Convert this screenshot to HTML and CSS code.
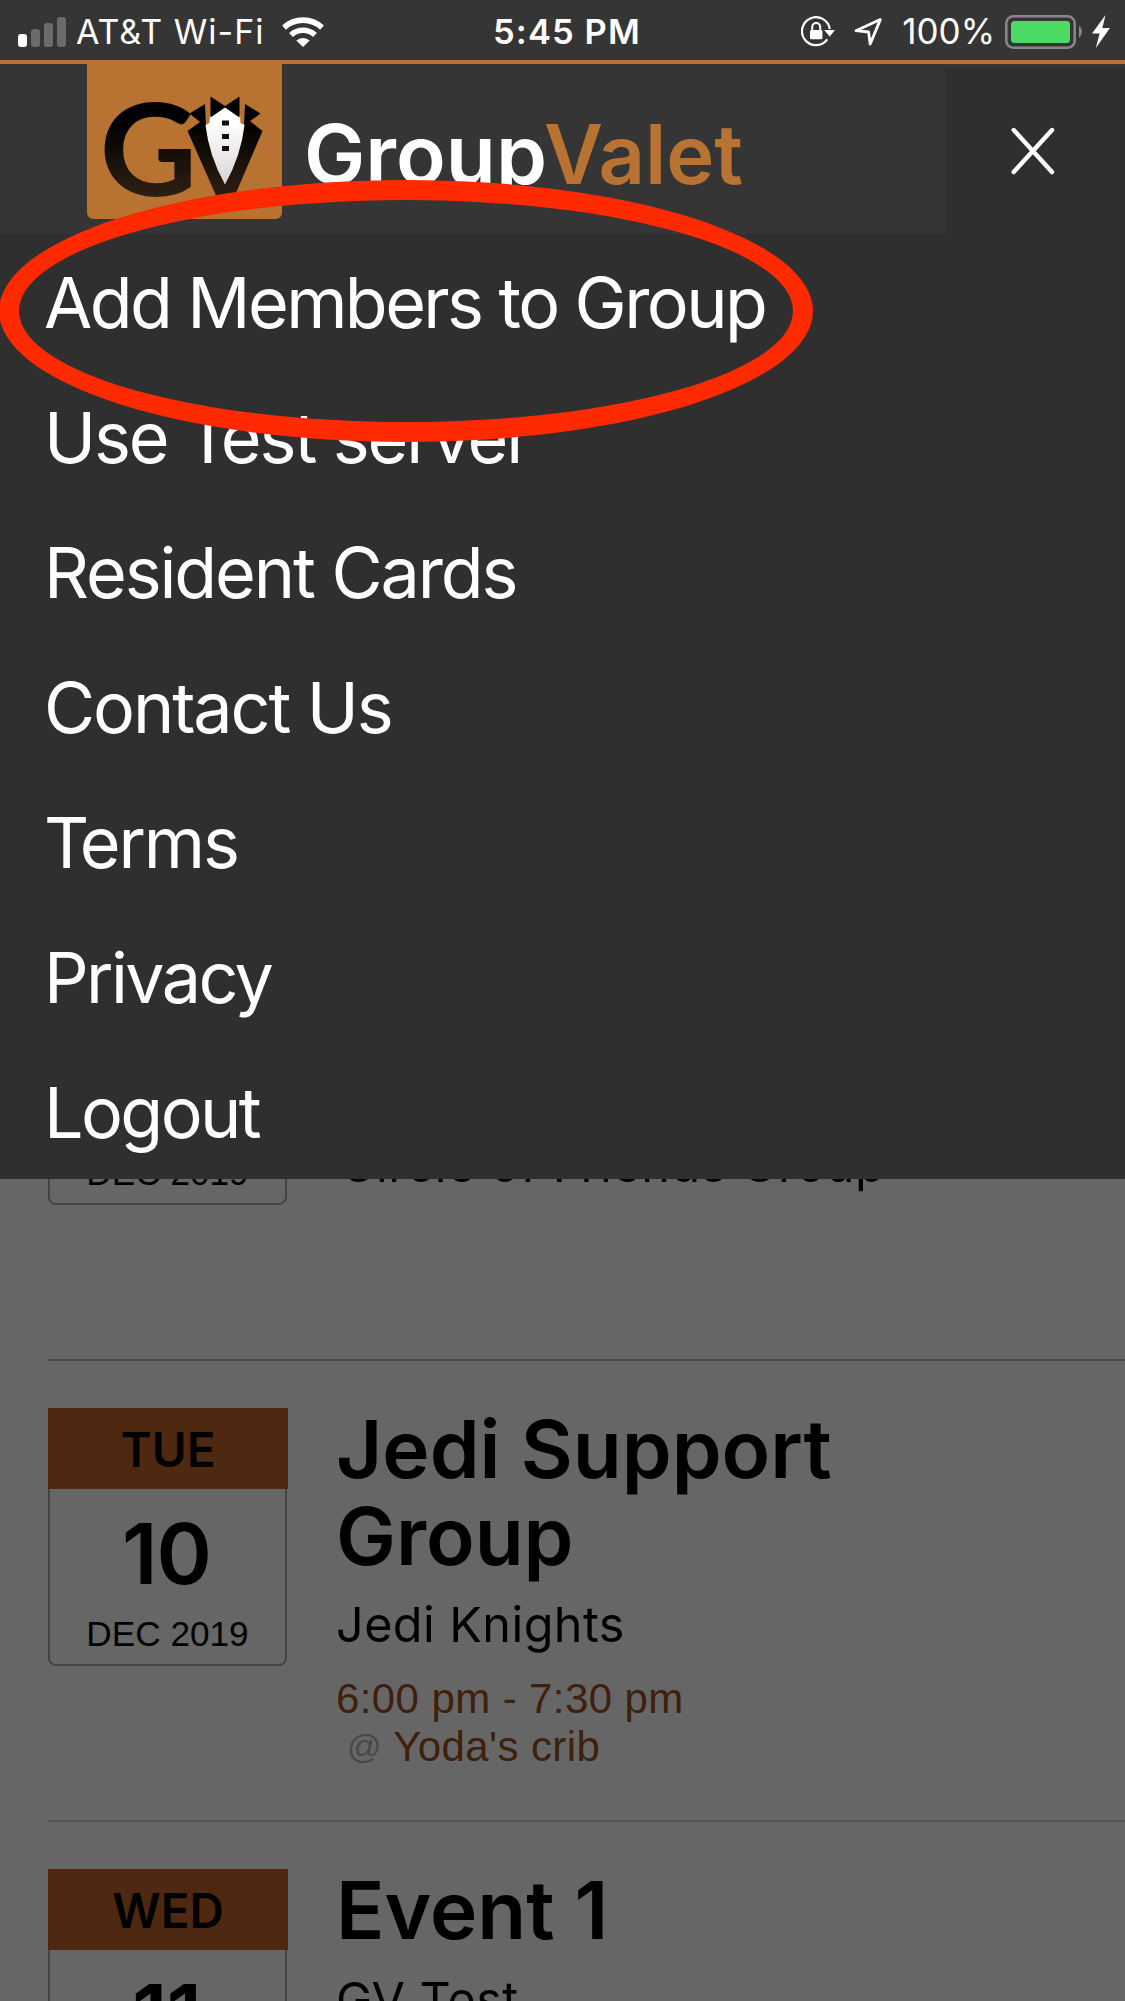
FILE: index.html
```html
<!DOCTYPE html>
<html lang="en">
  <head>
    <meta charset="UTF-8" />
    <meta name="viewport" content="width=device-width, initial-scale=1.0" />
    <title>GroupValet</title>
    <link rel="stylesheet" href="styles.css">
  </head>
  <body>
    <!-- Event list, dimmed behind the menu -->
    <main class="events">
      <section class="event">
        <div class="date-card">
          <div class="weekday"></div>
          <div class="day"></div>
          <div class="month">DEC 2019</div>
        </div>
        <div class="info">
          <h2 class="two-line"></h2>
          <p class="group wide">Circle of Friends Group</p>
        </div>
      </section>

      <section class="event">
        <div class="date-card">
          <div class="weekday">TUE</div>
          <div class="day">10</div>
          <div class="month">DEC 2019</div>
        </div>
        <div class="info">
          <h2>Jedi Support<br>Group</h2>
          <p class="group">Jedi Knights</p>
          <p class="time">6:00 pm - 7:30 pm</p>
          <p class="place"><span class="at">@</span> Yoda's crib</p>
        </div>
      </section>

      <section class="event last">
        <div class="date-card">
          <div class="weekday">WED</div>
          <div class="day">11</div>
        </div>
        <div class="info">
          <h2>Event 1</h2>
          <p class="group">GV Test</p>
        </div>
      </section>
    </main>

    <!-- Menu overlay -->
    <div class="overlay">
      <div class="status-bar">
        <div class="status-left">
          <svg class="signal" width="48" height="30" viewBox="0 0 48 30">
            <rect x="0" y="17" width="9" height="13" rx="3" fill="#fff" />
            <rect x="13" y="12" width="9" height="18" rx="3" fill="#6b6b6b" />
            <rect x="26" y="6" width="9" height="24" rx="3" fill="#6b6b6b" />
            <rect x="39" y="0" width="9" height="30" rx="3" fill="#6b6b6b" />
          </svg>
          <span class="carrier">AT&amp;T Wi-Fi</span>
          <svg class="wifi" width="42" height="30" viewBox="0 0 42 30">
            <path d="M21 30 L14.3 23.6 A10 10 0 0 1 27.7 23.6 Z" fill="#fff" />
            <path d="M9 18 A17.5 17.5 0 0 1 33 18" fill="none" stroke="#fff" stroke-width="5.6" />
            <path d="M2 10.6 A28 28 0 0 1 40 10.6" fill="none" stroke="#fff" stroke-width="5.6" />
          </svg>
        </div>
        <span class="clock">5:45 PM</span>
        <div class="status-right">
          <svg class="lock" width="35" height="31" viewBox="0 0 35 31">
            <path d="M26.3 23.4 A14 14 0 1 1 28.8 13" fill="none" stroke="#fff" stroke-width="2.2" />
            <path d="M23.2 14 H34 L28.7 20.5 Z" fill="#fff" />
            <rect x="9" y="14" width="12.4" height="9.3" rx="1.4" fill="#fff" />
            <path d="M11.2 15 V11 A4 4 0 0 1 19.2 11 V15" fill="none" stroke="#fff" stroke-width="2" />
          </svg>
          <svg class="location" width="28" height="28" viewBox="0 0 28 28">
            <path d="M26.3 1.6 L2 12.7 L14.6 14 L16.2 26 Z" fill="none" stroke="#fff" stroke-width="2.8" stroke-linejoin="round" />
          </svg>
          <span class="percent">100%</span>
          <svg class="battery" width="78" height="34" viewBox="0 0 78 34">
            <rect x="1.3" y="1.3" width="68.4" height="31.4" rx="7" fill="none" stroke="#878787" stroke-width="2.6" />
            <rect x="6" y="6" width="59" height="22" rx="3.5" fill="#4cd964" />
            <path d="M74 10.5 A8 8 0 0 1 74 23 Z" fill="#878787" />
          </svg>
          <svg class="bolt" width="18" height="33" viewBox="0 0 18 33">
            <path d="M13.5 0 L0 18.4 H7.6 L3.8 33 L18 13 H10.4 Z" fill="#fff" />
          </svg>
        </div>
      </div>

      <header>
        <div class="brand">
          <svg class="logo" width="945" height="174" viewBox="0 60 945 174">
            <defs>
              <linearGradient id="ink" gradientUnits="userSpaceOnUse" x1="0" y1="102" x2="0" y2="198">
                <stop offset="0.2" stop-color="#000" />
                <stop offset="1" stop-color="#302014" />
              </linearGradient>
              <linearGradient id="shirt" x1="0" y1="0" x2="0" y2="1">
                <stop offset="0.2" stop-color="#fff" />
                <stop offset="1" stop-color="#d8d4d4" />
              </linearGradient>
            </defs>
            <path d="M87 60 H282 V212 Q282 219 275 219 H94 Q87 219 87 212 Z" fill="#b87333" />
            <text class="logo-g" x="99.5" y="196" textLength="98" lengthAdjust="spacingAndGlyphs" fill="url(#ink)">G</text>
            <!-- jacket, shirt, bow tie and buttons -->
            <path d="M187.5 131 L200 122 L189.5 113.5 L205 104 L206 126 L225 184 L244 126 L245 104 L260.5 113.5 L250 121 L262.5 131 L233 200 H218 Z" fill="url(#ink)" />
            <path d="M210 116 L225 107 L240 116 L240.5 123 L244.5 125 Q241 156 225 184.5 Q209 156 205.5 125 L209.5 123 Z" fill="url(#shirt)" />
            <path d="M210.5 96.500 L225 106 L239.5 96.500 V117.500 L225 107.500 L210.5 117.500 Z" fill="#000" />
            <path d="M222 120.5 H229 V125.5 H222 Z M222 134 H229 V139 H222 Z M222 146 H229 V151 H222 Z" fill="#111" />
            <text class="word" x="304" y="183.5" textLength="243" lengthAdjust="spacingAndGlyphs" fill="#fff">Group</text>
            <text class="word" x="544" y="183.5" textLength="199" lengthAdjust="spacingAndGlyphs" fill="#b87333">Valet</text>
          </svg>
        </div>
        <div class="close">
          <svg width="44" height="48" viewBox="0 0 44 48">
            <path d="M2.7 3 L41 45 M41 3 L2.7 45" stroke="#fff" stroke-width="4.4" stroke-linecap="round" />
          </svg>
        </div>
      </header>

      <nav>
        <ul>
          <li class="tight">Add Members to Group</li>
          <li>Use <span class="kern">T</span>est server</li>
          <li>Resident Cards</li>
          <li>Contact Us</li>
          <li><span class="kern">T</span>erms</li>
          <li class="tight">Privacy</li>
          <li class="tight">Logout</li>
        </ul>
      </nav>

      <!-- Ring around the first menu entry -->
      <div class="ring"></div>
    </div>
  </body>
</html>
```
FILE: styles.css
```css
/* Basic styling */
* {
  box-sizing: border-box;
}

body {
  position: relative;
  width: 1125px;
  height: 2001px;
  margin: 0;
  overflow: hidden;
  background-color: #666;
  color: #000;
  font-family: Inter, "Liberation Sans", sans-serif;
}

h2,
p,
ul {
  margin: 0;
  padding: 0;
}

svg {
  display: block;
  flex: none;
}

/* Events */
.events {
  height: 2001px;
  padding: 898px 0 0 48px;
  overflow: hidden;
}

.event {
  display: grid;
  grid-template-columns: 240px 1fr;
  column-gap: 48px;
  align-items: start;
  height: 461px;
  padding-top: 45px;
  border-top: 2px solid #525252;
}

.date-card {
  height: 258px;
  margin: 2px 1px 0 0;
  border: 2px solid #444;
  border-top: none;
  border-radius: 0 0 8px 8px;
  text-align: center;
}

.last {
  height: 181px;
}

.weekday {
  height: 81px;
  margin: 0 -3px 0 -2px;
  background-color: #4e2810;
  font-size: 47.5px;
  font-weight: 600;
  line-height: 84px;
}

.day {
  height: 124px;
  padding-right: 2px;
  font-size: 84px;
  font-weight: 600;
  line-height: 129px;
  letter-spacing: -1px;
}

.month {
  font-family: "Liberation Sans", Arial, sans-serif;
  font-size: 35.2px;
  line-height: 42px;
}

.info h2 {
  font-size: 80px;
  font-weight: 600;
  line-height: 86.5px;
}

.info .two-line {
  height: 174px;
}

.group {
  margin-top: 16px;
  font-size: 48.5px;
  line-height: 60px;
  letter-spacing: 0.45px;
}

.wide {
  padding-left: 4px;
  letter-spacing: 0.6px;
}

.time,
.place {
  color: #3f200c;
  font-family: "Liberation Sans", Arial, sans-serif;
  font-size: 42px;
  line-height: 47.5px;
  letter-spacing: 0.4px;
}

.time {
  margin-top: 20px;
}

.place {
  padding-left: 11px;
}

.at {
  color: #484848;
  font-size: 34px;
  vertical-align: 3px;
}

/* Overlay */
.overlay {
  position: absolute;
  top: 0;
  left: 0;
  width: 1125px;
  height: 1179px;
  overflow: hidden;
  background-color: #2f2f2f;
  color: #fff;
}

.status-bar {
  display: grid;
  grid-template-columns: 493px 1fr auto;
  align-items: center;
  height: 60px;
  padding: 0 15px 0 18px;
  background-color: #353535;
  font-size: 34.5px;
  line-height: 63px;
  white-space: nowrap;
}

.status-left,
.status-right {
  display: flex;
  align-items: center;
}

.carrier {
  margin-left: 10px;
  font-size: 34px;
  letter-spacing: 1px;
}

.wifi {
  margin-left: 17px;
}

.clock {
  margin-left: -18px;
  font-weight: 600;
  letter-spacing: 1.1px;
}

.location {
  margin: 0 20px 0 18px;
}

.percent {
  font-size: 35px;
}

.battery {
  margin: 0 9px 0 10px;
}

header {
  display: flex;
  height: 174px;
  border-top: 4px solid #b87333;
}

.brand {
  width: 945px;
  background-color: #353535;
}

.logo {
  margin-top: -4px;
}

.logo-g {
  font-family: Lato, sans-serif;
  font-size: 129px;
  font-weight: 700;
}

.word {
  font-size: 82px;
  font-weight: 600;
}

.close {
  display: flex;
  flex: 1;
  align-items: center;
  justify-content: center;
  padding: 0 4px 2px 0;
  border-top: 5px solid #353535;
}

nav ul {
  list-style: none;
}

nav li {
  height: 135px;
  padding-left: 44px;
  font-size: 70px;
  line-height: 138px;
  letter-spacing: -2.1px;
  white-space: nowrap;
}

nav .tight {
  letter-spacing: -2.6px;
}

/* pull the next letter under the T */
.kern {
  letter-spacing: -9.5px;
}

.ring {
  position: absolute;
  top: 180px;
  left: -1px;
  width: 814px;
  height: 262px;
  border: 20.5px solid #ff2a00;
  border-radius: 50%;
}
```
